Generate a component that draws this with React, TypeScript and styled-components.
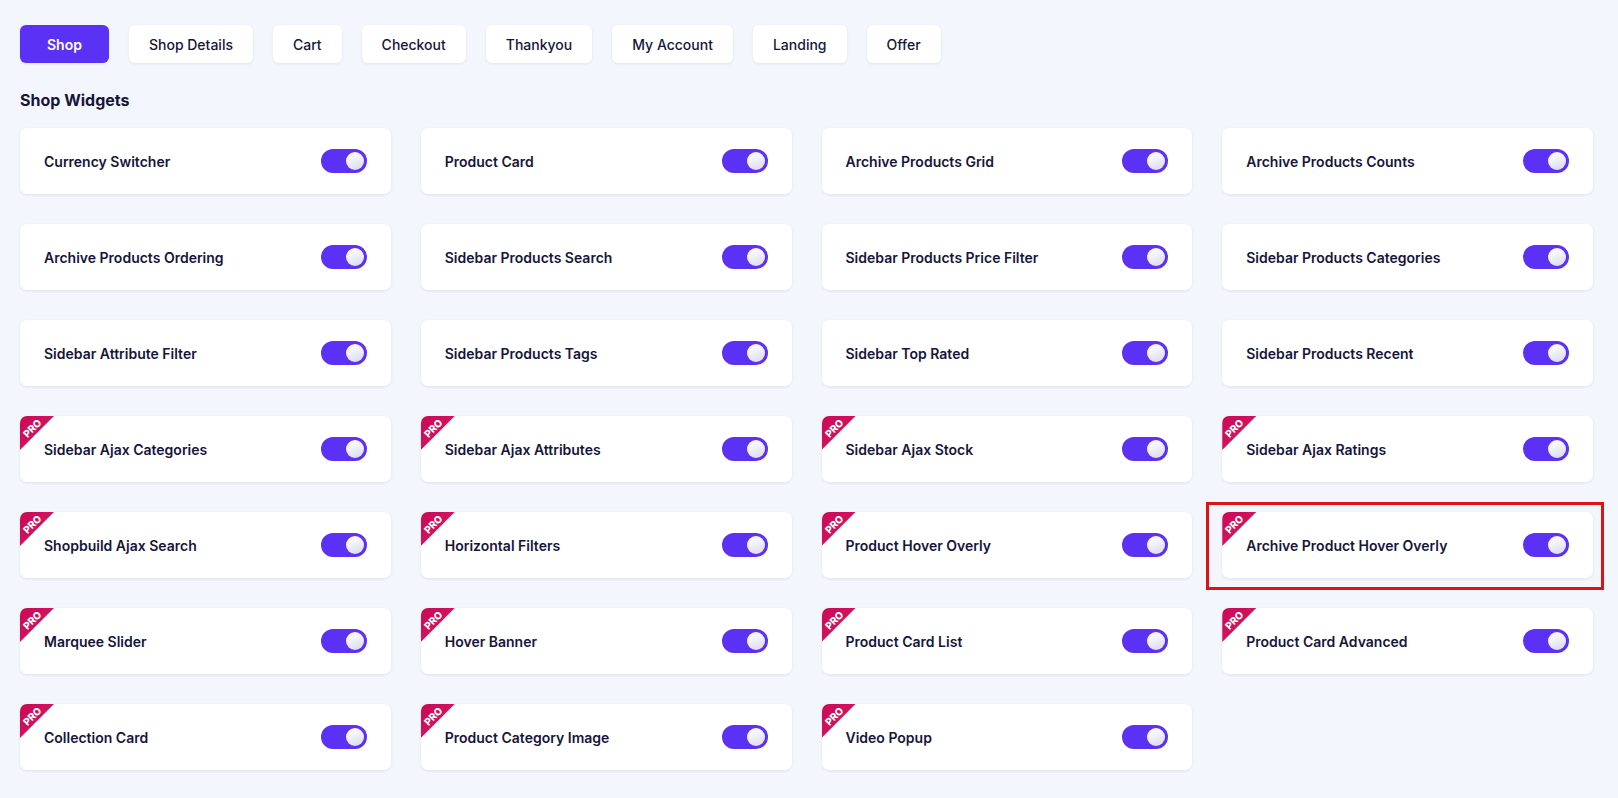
import React from "react";
import styled, { createGlobalStyle } from "styled-components";

const GlobalStyle = createGlobalStyle`
  html, body { margin: 0; padding: 0; background: #f4f6fd; }
  body { font-family: Inter, "Noto Sans", "Liberation Sans", sans-serif; color: #16163a; }
  * { box-sizing: border-box; }
`;

const Page = styled.div`
  display: flex;
  flex-direction: column;
  padding: 25px 25px 30px 20px;
  min-height: 798px;
`;

const Tabs = styled.div`
  display: flex;
  gap: 20px;
`;

const Tab = styled.button<{ $active?: boolean }>`
  height: 38px;
  padding: 0 ${(p) => (p.$active ? "27px" : "20px")};
  border: none;
  border-radius: 6px;
  font-family: inherit;
  font-size: 14px;
  font-weight: ${(p) => (p.$active ? 600 : 500)};
  color: ${(p) => (p.$active ? "#ffffff" : "#16163a")};
  background: ${(p) => (p.$active ? "#5b31f5" : "#ffffff")};
  box-shadow: 0 1px 3px rgba(20, 20, 60, 0.08);
  cursor: pointer;
`;

const Heading = styled.h2`
  margin: 25px 0 16px;
  font-size: 16px;
  line-height: 24px;
  font-weight: 700;
  color: #16163a;
`;

const Grid = styled.div`
  display: grid;
  grid-template-columns: repeat(4, 1fr);
  column-gap: 30px;
  row-gap: 30px;
`;

const Card = styled.div<{ $highlight?: boolean }>`
  position: relative;
  height: 66px;
  display: flex;
  align-items: center;
  justify-content: space-between;
  padding: 0 24px;
  background: #ffffff;
  border-radius: 7px;
  box-shadow: 0 1px 3px rgba(20, 20, 60, 0.09);
  ${(p) =>
    p.$highlight &&
    `
    &::after {
      content: "";
      position: absolute;
      left: -16px;
      right: -11px;
      top: -10px;
      bottom: -12px;
      border: 3px solid #dd1414;
      pointer-events: none;
    }
  `}
`;

const Ribbon = styled.div`
  position: absolute;
  left: 0;
  top: 0;
  width: 34px;
  height: 34px;
  border-top-left-radius: 7px;
  background: linear-gradient(135deg, #c80a55 0%, #e01764 100%);
  clip-path: polygon(0 0, 100% 0, 0 100%);
`;

const RibbonText = styled.span`
  position: absolute;
  left: -1px;
  top: 7px;
  width: 26px;
  text-align: center;
  font-size: 10px;
  line-height: 10px;
  font-weight: 800;
  color: #ffffff;
  transform: rotate(-45deg);
`;

const Label = styled.span`
  font-size: 14px;
  font-weight: 600;
  color: #16163a;
`;

const Toggle = styled.span`
  position: relative;
  flex: none;
  width: 46px;
  height: 24px;
  border-radius: 12px;
  background: #5b31f5;
`;

const Knob = styled.span`
  position: absolute;
  right: 3px;
  top: 3px;
  width: 18px;
  height: 18px;
  border-radius: 50%;
  background: linear-gradient(160deg, #ffffff 0%, #f0f0f8 45%, #d8d8ec 100%);
`;

const tabs = ["Shop", "Shop Details", "Cart", "Checkout", "Thankyou", "My Account", "Landing", "Offer"];

type Widget = { name: string; pro?: boolean; highlight?: boolean };

const widgets: Widget[] = [
  { name: "Currency Switcher" },
  { name: "Product Card" },
  { name: "Archive Products Grid" },
  { name: "Archive Products Counts" },
  { name: "Archive Products Ordering" },
  { name: "Sidebar Products Search" },
  { name: "Sidebar Products Price Filter" },
  { name: "Sidebar Products Categories" },
  { name: "Sidebar Attribute Filter" },
  { name: "Sidebar Products Tags" },
  { name: "Sidebar Top Rated" },
  { name: "Sidebar Products Recent" },
  { name: "Sidebar Ajax Categories", pro: true },
  { name: "Sidebar Ajax Attributes", pro: true },
  { name: "Sidebar Ajax Stock", pro: true },
  { name: "Sidebar Ajax Ratings", pro: true },
  { name: "Shopbuild Ajax Search", pro: true },
  { name: "Horizontal Filters", pro: true },
  { name: "Product Hover Overly", pro: true },
  { name: "Archive Product Hover Overly", pro: true, highlight: true },
  { name: "Marquee Slider", pro: true },
  { name: "Hover Banner", pro: true },
  { name: "Product Card List", pro: true },
  { name: "Product Card Advanced", pro: true },
  { name: "Collection Card", pro: true },
  { name: "Product Category Image", pro: true },
  { name: "Video Popup", pro: true },
];

export default function App() {
  return (
    <>
      <GlobalStyle />
      <Page>
        <Tabs>
          {tabs.map((t, i) => (
            <Tab key={t} $active={i === 0}>
              {t}
            </Tab>
          ))}
        </Tabs>
        <Heading>Shop Widgets</Heading>
        <Grid>
          {widgets.map((w) => (
            <Card key={w.name} $highlight={w.highlight}>
              {w.pro && (
                <Ribbon>
                  <RibbonText>PRO</RibbonText>
                </Ribbon>
              )}
              <Label>{w.name}</Label>
              <Toggle>
                <Knob />
              </Toggle>
            </Card>
          ))}
        </Grid>
      </Page>
    </>
  );
}
